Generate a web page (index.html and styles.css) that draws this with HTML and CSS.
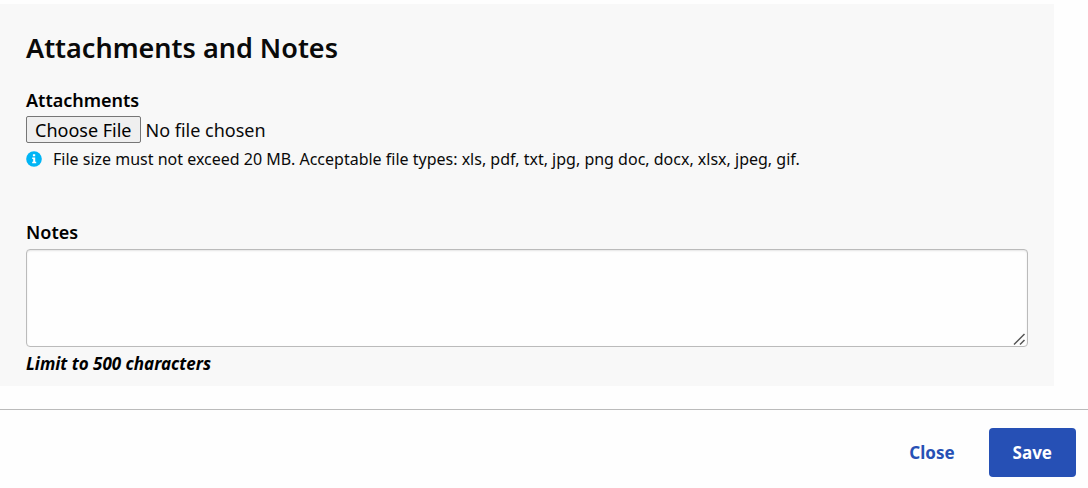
FILE: index.html
```html
<!DOCTYPE html>
<html lang="en">

<head>
    <meta charset="UTF-8">
    <meta name="viewport" content="width=device-width, initial-scale=1.0">
    <title>Attachments and Notes</title>
    <link rel="stylesheet" href="styles.css">
</head>

<body>
    <form>
        <section class="panel">
            <h2>Attachments and Notes</h2>
            <div class="field">
                <label for="attachment">Attachments</label>
                <input type="file" id="attachment">
                <p class="info">
                    <svg width="16" height="16" viewBox="0 0 16 16" aria-hidden="true">
                        <circle cx="8" cy="8" r="7.8" fill="#00b5f5" />
                        <path d="M6.9 3.3h2.3v2H6.9zM6.2 6.4h3v4.3h1v1.6h-4v-1.6h1V8h-1z" fill="#fff" />
                    </svg>
                    File size must not exceed 20 MB. Acceptable file types: xls, pdf, txt, jpg, png doc, docx, xlsx, jpeg, gif.
                </p>
            </div>
            <div class="field">
                <label for="notes">Notes</label>
                <textarea id="notes" maxlength="500"></textarea>
                <p class="limit">Limit to 500 characters</p>
            </div>
        </section>
        <footer>
            <button type="button" class="btn">Close</button>
            <button type="submit" class="btn primary">Save</button>
        </footer>
    </form>
</body>

</html>
```
FILE: styles.css
```css
* {
    box-sizing: border-box;
}

body {
    margin: 0;
    padding-top: 4px;
    background: #fefefe;
    color: #0a0a0a;
    font-family: "Noto Sans", sans-serif;
    font-size: 18px;
    line-height: 24px;
}

.panel {
    margin-right: 34px;
    padding: 28px 26px 10px;
    background: #f8f8f8;
}

h2 {
    margin: 0 0 24px;
    font-size: 27px;
    font-weight: 600;
    line-height: 32px;
}

.field label {
    display: block;
    color: #000;
    font-weight: 600;
}

.field + .field {
    margin-top: 49px;
}

input[type="file"] {
    display: block;
    width: 100%;
    height: 27px;
    margin-top: 4px;
    font: inherit;
}

input[type="file"]::file-selector-button {
    height: 27px;
    margin-right: 5px;
    padding: 0 8px;
    border: 1px solid #767676;
    border-radius: 2px;
    background: #efefef;
    color: #000;
    font: inherit;
}

.info {
    display: flex;
    align-items: center;
    gap: 11px;
    margin: 4px 0 0;
    font-size: 16px;
}

.info svg {
    flex: none;
}

textarea {
    display: block;
    width: 100%;
    height: 98px;
    margin-top: 5px;
    padding: 8px;
    border: 1px solid #bbb;
    border-radius: 4px;
    background: #fefefe;
    box-shadow: inset 0 1px 2px rgba(0, 0, 0, .1);
    font: inherit;
    resize: vertical;
}

textarea::-webkit-resizer {
    background: url("data:image/svg+xml,%3Csvg xmlns='http://www.w3.org/2000/svg' width='15' height='15'%3E%3Cpath d='M2 13.5 12.5 3M8 13.5l4.500-4.500' stroke='%23555' stroke-width='1.500'/%3E%3C/svg%3E") no-repeat;
}

.limit {
    margin: 5px 0 0;
    color: #000;
    font-size: 17px;
    font-style: italic;
    font-weight: 700;
}

footer {
    display: flex;
    justify-content: flex-end;
    gap: 10px;
    margin-top: 23px;
    padding: 18px 12px 11px;
    border-top: 1px solid #bbb;
}

.btn {
    height: 49px;
    padding: 0 24px;
    border: 0;
    border-radius: 4px;
    background: none;
    color: #2650b5;
    font: inherit;
    font-size: 17px;
    font-weight: 700;
}

.primary {
    background: #2650b5;
    color: #fff;
}
```
